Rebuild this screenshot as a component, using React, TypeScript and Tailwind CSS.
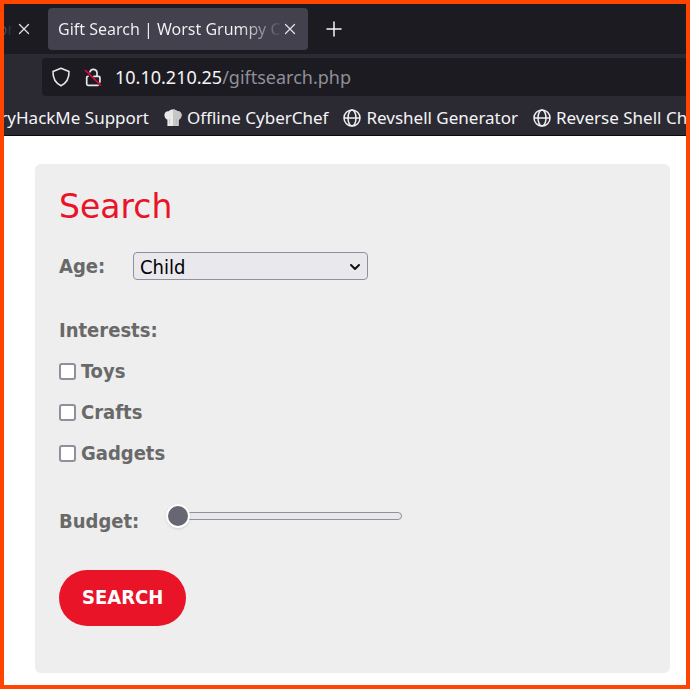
import type { ReactNode } from "react";

const chromeFont = "font-['Noto_Sans','Open_Sans',sans-serif]";

function CloseIcon() {
  return (
    <svg viewBox="0 0 12 12" className="size-3 shrink-0" fill="none" stroke="#e2e2e6" strokeWidth="1.3" strokeLinecap="round" aria-hidden="true">
      <path d="M1.5 1.5 10.5 10.5M10.5 1.5 1.5 10.5" />
    </svg>
  );
}

function GlobeIcon() {
  return (
    <svg viewBox="0 0 18 18" className="size-[18px] shrink-0" fill="none" stroke="#f0f0f3" strokeWidth="1.5" aria-hidden="true">
      <circle cx="9" cy="9" r="8" />
      <ellipse cx="9" cy="9" rx="4" ry="8" />
      <path d="M1 9H17" />
    </svg>
  );
}

function ChefHatIcon() {
  return (
    <svg viewBox="0 0 18 18" className="size-[18px] shrink-0" aria-hidden="true">
      <path d="M3.4 10.8C1.4 10.200.3 7.800.4 5.800.5 3.400 2.600 1.800 4.600 2.300 5.700.9 7.300.4 9 .4c1.800 0 3.400.5 4.400 1.900 2-.5 4.100 1.100 4.200 3.500.1 2-1 4.400-3 5V17H3.400Z" fill="#e9e9e8" />
      <path d="M9 .4c1.800 0 3.400.5 4.400 1.900 2-.5 4.100 1.100 4.200 3.500.1 2-1 4.400-3 5V17H9Z" fill="#c6c6c4" />
      <path d="M5.500 10V14.500M12.500 10V14.500" stroke="#b2b2b0" strokeWidth=".6" />
    </svg>
  );
}

function ShieldIcon() {
  return (
    <svg viewBox="0 0 20 20" className="size-5 shrink-0" fill="none" stroke="#e6e6ea" strokeWidth="1.6" strokeLinejoin="round" aria-hidden="true">
      <path d="M10 1.300 18 4.500C18.200 10.500 15.500 16 10 18.700 4.500 16 1.800 10.500 2 4.500Z" />
    </svg>
  );
}

function InsecureIcon() {
  return (
    <svg viewBox="0 0 20 20" className="size-5 shrink-0" fill="none" aria-hidden="true">
      <path d="M7 4.800a3.600 3.600 0 0 1 7 .7V9.300M11 9.300H15.700a1.200 1.200 0 0 1 1.200 1.200V15M5 9.300a1.300 1.300 0 0 0-1.300 1.300v6.400a1.300 1.300 0 0 0 1.300 1.300H15" stroke="#e6e6ea" strokeWidth="1.700" strokeLinecap="round" />
      <path d="M2 3 18 18.500" stroke="#e8063e" strokeWidth="1.700" />
    </svg>
  );
}

function Bookmark({ icon, children }: { icon?: ReactNode; children: ReactNode }) {
  return (
    <a href="#" className="flex shrink-0 items-center gap-[5px] whitespace-nowrap">
      {icon}
      {children}
    </a>
  );
}

const interests = ["Toys", "Crafts", "Gadgets"];

export default function App() {
  return (
    <div className="flex min-h-screen flex-col overflow-hidden border-4 border-[#ff4500] bg-white">
      <header className={`${chromeFont} bg-[#2b2a33] text-[#f4f4f7]`}>
        <div className="flex h-[50px] items-center bg-[#1c1b22] text-base">
          <div className="flex w-11 shrink-0 items-center justify-end gap-1 pr-[18px]">
            <span className="bg-linear-to-r from-[#77767b] to-[#1c1b22] bg-clip-text text-transparent">or</span>
            <button type="button" aria-label="Close previous tab">
              <CloseIcon />
            </button>
          </div>
          <div className="flex h-[42px] w-[260px] shrink-0 items-center rounded bg-[#42414d] pr-3 pl-[10px]">
            <span className="flex-1 overflow-hidden bg-linear-to-r from-[#f4f4f7] from-80% to-[#42414d] bg-clip-text whitespace-nowrap text-transparent">
              Gift Search | Worst Grumpy C
            </span>
            <button type="button" aria-label="Close tab">
              <CloseIcon />
            </button>
          </div>
          <button type="button" aria-label="New tab" className="ml-[18px]">
            <svg viewBox="0 0 16 16" className="size-4" stroke="#f4f4f7" strokeWidth="1.500" strokeLinecap="round" aria-hidden="true">
              <path d="M8 1V15M1 8H15" />
            </svg>
          </button>
        </div>
        <div className="pt-1 pl-[38px]">
          <div className="flex h-[38px] items-center gap-3 rounded-l bg-[#1c1b22] pl-[9px] text-lg">
            <ShieldIcon />
            <InsecureIcon />
            <span className="whitespace-nowrap text-[#8f8f98]">
              <span className="text-[#f4f4f7]">10.10.210.25</span>/giftsearch.php
            </span>
          </div>
        </div>
        <nav aria-label="Bookmarks" className="flex h-10 items-center gap-[15px] overflow-hidden border-b border-[#0c0c0d] pt-1 text-[17px]">
          <div className="flex w-[145px] shrink-0 justify-end overflow-hidden">
            <Bookmark>TryHackMe Support</Bookmark>
          </div>
          <Bookmark icon={<ChefHatIcon />}>Offline CyberChef</Bookmark>
          <Bookmark icon={<GlobeIcon />}>Revshell Generator</Bookmark>
          <Bookmark icon={<GlobeIcon />}>Reverse Shell Cheat Sheet</Bookmark>
        </nav>
      </header>

      <main className="flex flex-1 flex-col pt-7 pr-4 pb-3 pl-[31px]">
        <form
          className="flex-1 rounded-md bg-[#eeeeee] px-6 pt-[21px] pb-[46px] font-['DejaVu_Sans_Condensed','DejaVu_Sans',sans-serif] text-xl font-bold text-[#696969]"
          onSubmit={(e) => e.preventDefault()}
        >
          <h1 className="font-['DejaVu_Sans',sans-serif] text-[33px] leading-11 font-normal text-[#e91428]">Search</h1>
          <div className="mt-[23px] flex items-center">
            <label htmlFor="age" className="w-[74px]">
              Age:
            </label>
            <div className="relative w-[235px]">
              <select id="age" className="block h-7 w-full appearance-none rounded border border-[#8f8f9d] bg-[#e9e9ed] pb-[2px] pl-[6px] font-normal text-black">
                <option>Child</option>
                <option>Teen</option>
                <option>Adult</option>
              </select>
              <svg viewBox="0 0 12 8" className="pointer-events-none absolute top-[11px] right-[7px] h-2 w-3" fill="none" stroke="#111" strokeWidth="2" strokeLinecap="round" strokeLinejoin="round" aria-hidden="true">
                <path d="M2 2 6 6 10 2" />
              </svg>
            </div>
          </div>
          <fieldset className="mt-9">
            <legend>Interests:</legend>
            <div className="mt-[13px] flex flex-col gap-[13px]">
              {interests.map((name) => (
                <label key={name} className="flex items-center gap-[5px]">
                  <input type="checkbox" className="size-[17px] appearance-none rounded-[3px] border-2 border-[#8f8f9d] bg-white" />
                  {name}
                </label>
              ))}
            </div>
          </fieldset>
          <div className="mt-[30px] flex items-center">
            <label htmlFor="budget" className="w-[108px] pt-[10px]">
              Budget:
            </label>
            <input
              id="budget"
              type="range"
              min="0"
              max="100"
              defaultValue="0"
              className="h-6 w-[235px] appearance-none bg-transparent [&::-webkit-slider-runnable-track]:h-2 [&::-webkit-slider-runnable-track]:rounded-full [&::-webkit-slider-runnable-track]:border [&::-webkit-slider-runnable-track]:border-[#8f8f9d] [&::-webkit-slider-runnable-track]:bg-[#e9e9ed] [&::-webkit-slider-thumb]:-mt-[9px] [&::-webkit-slider-thumb]:-ml-[2px] [&::-webkit-slider-thumb]:size-6 [&::-webkit-slider-thumb]:appearance-none [&::-webkit-slider-thumb]:rounded-full [&::-webkit-slider-thumb]:border-2 [&::-webkit-slider-thumb]:border-white [&::-webkit-slider-thumb]:bg-[#676774] [&::-webkit-slider-thumb]:shadow"
            />
          </div>
          <button type="submit" className="mt-[35px] block h-14 rounded-full bg-[#e91428] px-[23px] pb-[2px] text-white">
            SEARCH
          </button>
        </form>
      </main>
    </div>
  );
}
